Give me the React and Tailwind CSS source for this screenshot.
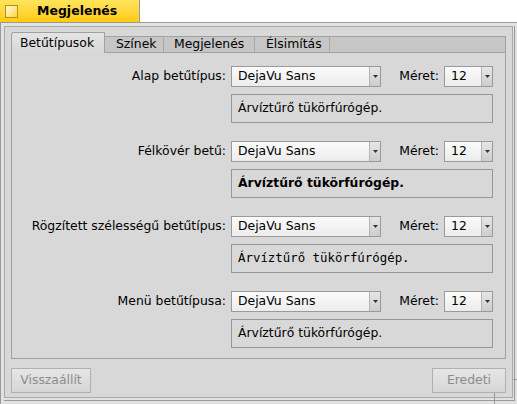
import React from "react";

const F = { fontFamily: '"DejaVu Sans", "Liberation Sans", sans-serif' };

function Arrow() {
  return (
    <svg width="5" height="3" viewBox="0 0 5 3" className="block">
      <path d="M0 0 H5 L2.5 3 Z" fill="#333" />
    </svg>
  );
}

function Select({ value, w }) {
  return (
    <div
      className="flex h-[21px] border border-[#9a9a9a] bg-gradient-to-b from-[#fbfbfb] to-[#ececec]"
      style={{ width: w }}
    >
      <div className="flex flex-1 items-center pl-[6px] text-[12.4px] text-black">{value}</div>
      <div className="flex w-[11px] items-center justify-center border-l border-[#b4b4b4] bg-gradient-to-b from-[#e6e6e6] to-[#cdcdcd]">
        <Arrow />
      </div>
    </div>
  );
}

function Group({ label, preview, previewClass, previewFont, mt }) {
  return (
    <div className={mt}>
      <div className="flex items-center">
        <div className="w-[214px] text-right text-[12.4px] text-black">{label}</div>
        <div className="ml-[5px]">
          <Select value="DejaVu Sans" w={150} />
        </div>
        <div className="w-[58px] text-right text-[12.4px] text-black">Méret:</div>
        <div className="ml-[5px]">
          <Select value="12" w={49} />
        </div>
      </div>
      <div className="ml-[219px] mt-[7px] flex h-[29px] w-[262px] items-center border border-[#969696] pl-[6px]">
        <span className={previewClass} style={previewFont}>
          {preview}
        </span>
      </div>
    </div>
  );
}

export default function App() {
  return (
    <div className="relative h-[404px] w-[517px] overflow-hidden bg-white" style={F}>
      {/* title tab */}
      <div className="flex h-[22px] w-[140px] items-center border-r border-[#9a9a9a] bg-gradient-to-b from-[#ffe45a] to-[#ffcb00]">
        <div className="ml-[5px] h-[13px] w-[13px] border border-[#b49400] bg-gradient-to-br from-[#fffbe0] to-[#ffd21a]" />
        <div className="ml-[19px] text-[12.5px] font-bold text-black">Megjelenés</div>
      </div>
      {/* window frame */}
      <div className="h-[382px] w-[517px] border-l border-t border-[#9a9a9a] bg-[#e2e2e2] pb-[3px] pl-[3px] pr-[2px] pt-[3px]">
        <div className="h-full border-b border-r border-[#9a9a9a] pb-[2px] pr-[1px]">
          <div className="flex h-full w-full flex-col border border-[#a9a9a9] bg-[#d8d8d8] px-[6px] pt-[5px]">
            {/* tab strip */}
            <div className="flex h-[21px] items-end">
              <div className="flex h-[21px] w-[94px] items-center rounded-tl-[3px] border border-b-0 border-[#a0a0a0] bg-gradient-to-b from-[#e4e4e4] to-[#d8d8d8] pl-[8px] text-[12.4px] text-black">
                Betűtípusok
              </div>
              <div className="flex h-[17px] flex-1 border-b border-t border-[#a0a0a0] bg-[#c6c6c6] text-[12.4px] text-black">
                <div className="flex w-[59px] items-center border-r border-[#a8a8a8] pl-[11px]">Színek</div>
                <div className="flex w-[91px] items-center border-r border-[#a8a8a8] pl-[10px]">Megjelenés</div>
                <div className="flex w-[75px] items-center border-r border-[#a8a8a8] pl-[11px]">Élsimítás</div>
                <div className="flex-1 border-r border-[#a0a0a0]" />
              </div>
            </div>
            {/* pane */}
            <div className="h-[306px] border border-t-0 border-[#a0a0a0] pt-[13px]">
              <Group
                label="Alap betűtípus:"
                preview="Árvíztűrő tükörfúrógép."
                previewClass="text-[12.4px] text-black"
              />
              <Group
                mt="mt-[18px]"
                label="Félkövér betű:"
                preview="Árvíztűrő tükörfúrógép."
                previewClass="text-[12.4px] font-bold text-black"
              />
              <Group
                mt="mt-[18px]"
                label="Rögzített szélességű betűtípus:"
                preview="Árvíztűrő tükörfúrógép."
                previewClass="text-[12.4px] text-black"
                previewFont={{ fontFamily: '"DejaVu Sans Mono", "Liberation Mono", monospace' }}
              />
              <Group
                mt="mt-[18px]"
                label="Menü betűtípusa:"
                preview="Árvíztűrő tükörfúrógép."
                previewClass="text-[12.4px] text-black"
              />
            </div>
            {/* buttons */}
            <div className="mt-[9px] flex justify-between">
              <div className="flex h-[25px] w-[80px] items-center justify-center border border-[#b0b0b0] bg-gradient-to-b from-[#e6e6e6] to-[#d6d6d6] text-[12.4px] text-[#8c8c8c]">
                Visszaállít
              </div>
              <div className="flex h-[25px] w-[74px] items-center justify-center border border-[#b0b0b0] bg-gradient-to-b from-[#e6e6e6] to-[#d6d6d6] text-[12.4px] text-[#8c8c8c]">
                Eredeti
              </div>
            </div>
          </div>
        </div>
      </div>
      {/* resize knob marks */}
      <div className="absolute left-[494px] top-[393px] h-[11px] w-px bg-[#9a9a9a]" />
      <div className="absolute left-[513px] top-[379px] h-px w-[4px] bg-[#9a9a9a]" />
    </div>
  );
}
